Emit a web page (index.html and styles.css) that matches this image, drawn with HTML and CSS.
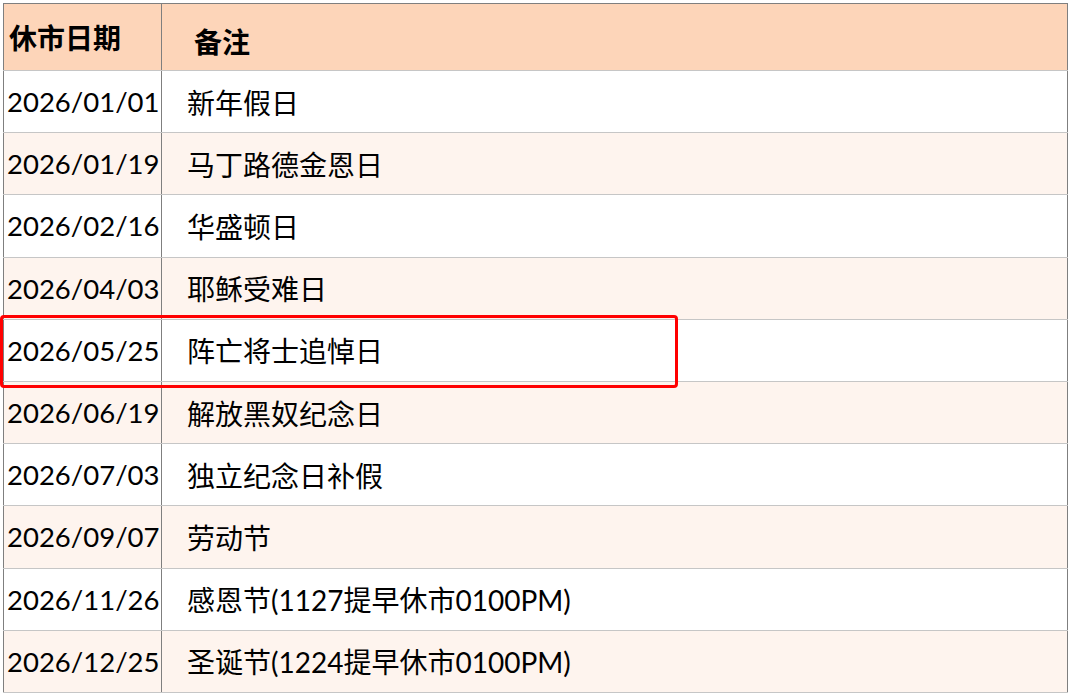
FILE: index.html
```html
<!DOCTYPE html>
<html lang="zh">
<head>
<meta charset="utf-8">
<title>休市日期</title>
<link rel="stylesheet" href="styles.css">
</head>
<body>
<div class="wrap">
  <table class="holidays">
    <colgroup>
      <col class="col-date">
      <col class="col-note">
    </colgroup>
    <thead>
      <tr>
        <th class="c-date">休市日期</th>
        <th class="c-note">备注</th>
      </tr>
    </thead>
    <tbody>
      <tr><td class="c-date">2026/01/01</td><td class="c-note">新年假日</td></tr>
      <tr class="alt"><td class="c-date">2026/01/19</td><td class="c-note">马丁路德金恩日</td></tr>
      <tr><td class="c-date">2026/02/16</td><td class="c-note">华盛顿日</td></tr>
      <tr class="alt"><td class="c-date">2026/04/03</td><td class="c-note">耶稣受难日</td></tr>
      <tr><td class="c-date">2026/05/25</td><td class="c-note">阵亡将士追悼日</td></tr>
      <tr class="alt"><td class="c-date">2026/06/19</td><td class="c-note">解放黑奴纪念日</td></tr>
      <tr><td class="c-date">2026/07/03</td><td class="c-note">独立纪念日补假</td></tr>
      <tr class="alt"><td class="c-date">2026/09/07</td><td class="c-note">劳动节</td></tr>
      <tr><td class="c-date">2026/11/26</td><td class="c-note">感恩节(1127提早休市0100PM)</td></tr>
      <tr class="alt"><td class="c-date">2026/12/25</td><td class="c-note">圣诞节(1224提早休市0100PM)</td></tr>
    </tbody>
  </table>
  <div class="highlight"></div>
</div>
</body>
</html>
```
FILE: styles.css
```css
html, body {
  margin: 0;
  padding: 0;
  background: #ffffff;
}
.wrap {
  position: relative;
  padding: 3px 0 0 3px;
  width: 1072px;
  height: 696px;
  box-sizing: border-box;
  overflow: hidden;
}
.holidays {
  border-collapse: collapse;
  table-layout: fixed;
  width: 1065px;
  font-family: Lato, "Noto Sans CJK SC", sans-serif;
  font-size: 27.5px;
  color: #000;
  border-top: 1px solid #7f7f7f;
  border-left: 1px solid #7f7f7f;
  border-right: 1px solid #7f7f7f;
}
.col-date {
  width: 158px;
}
.holidays th {
  background: #fdd5b9;
  font-weight: 700;
  font-size: 28px;
  text-align: left;
  height: 58px;
  padding: 0;
  border-bottom: 1px solid #c6c6c6;
  vertical-align: middle;
}
.holidays th.c-date {
  padding-left: 5px;
}
.holidays th.c-note {
  padding-left: 32px;
  padding-top: 8px;
}
.holidays td {
  height: 61.2px;
  padding: 0;
  border-bottom: 1px solid #c6c6c6;
  vertical-align: middle;
  white-space: nowrap;
}
.holidays .c-date {
  border-right: 1px solid #7f7f7f;
}
.holidays td.c-date {
  padding-left: 3px;
}
.holidays td.c-note {
  padding-left: 25px;
  font-size: 28px;
}
.holidays tr.alt td {
  background: #fef4ee;
}
.highlight {
  position: absolute;
  left: 0;
  top: 315px;
  width: 678px;
  height: 73px;
  box-sizing: border-box;
  border: 3px solid #ff0000;
  border-radius: 4px;
}
```
